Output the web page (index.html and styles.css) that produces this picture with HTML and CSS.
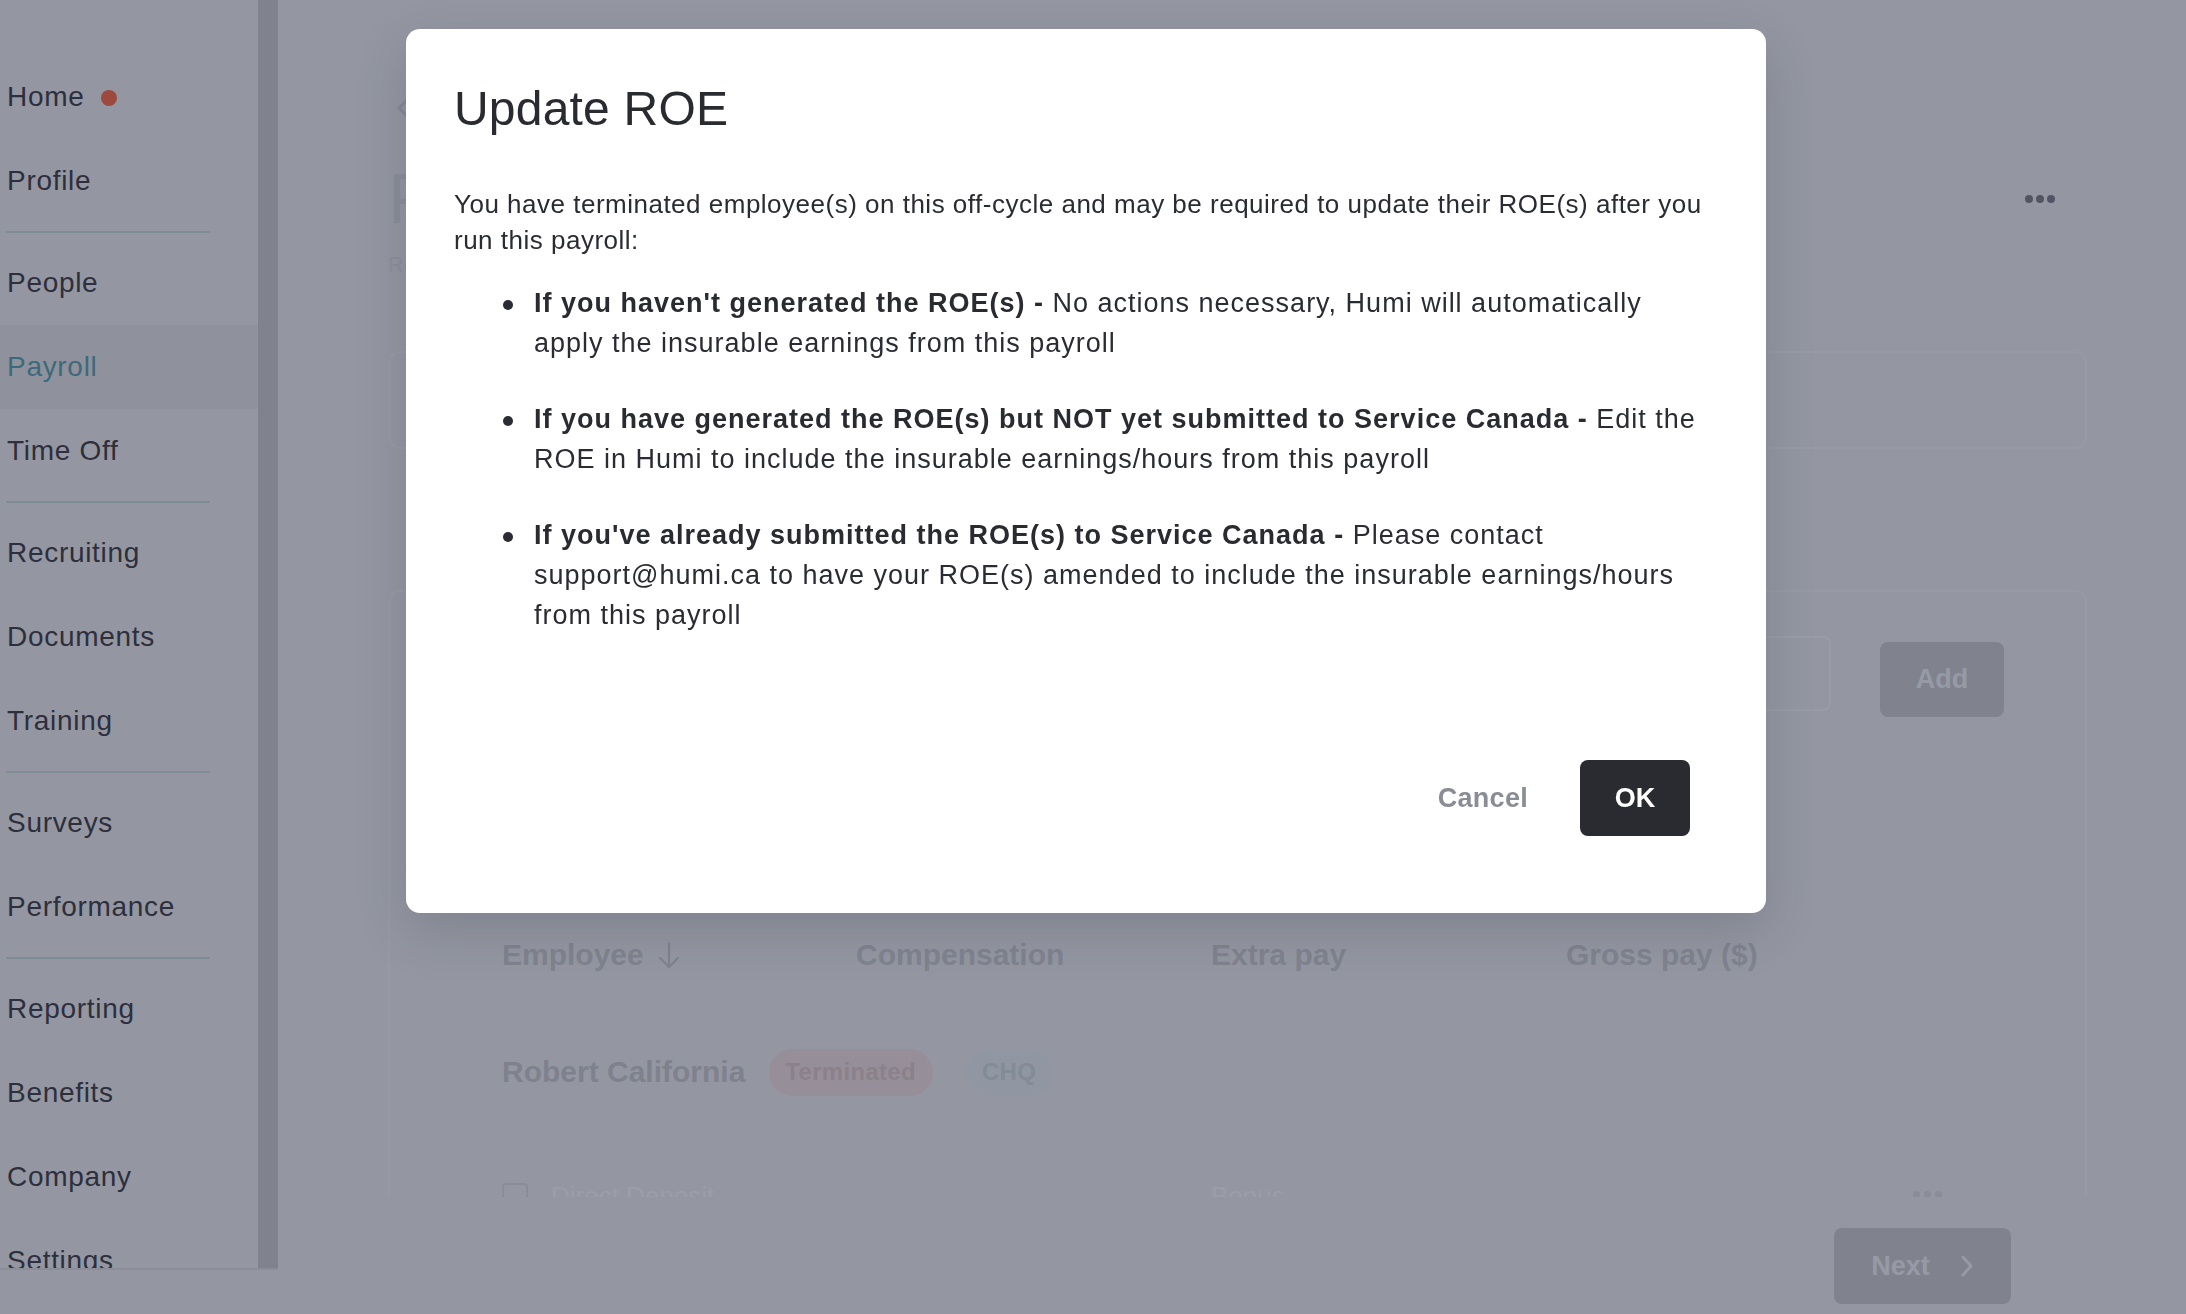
FILE: index.html
```html
<!DOCTYPE html>
<html lang="en">
<head>
<meta charset="utf-8">
<title>Update ROE</title>
<link rel="stylesheet" href="styles.css">
</head>
<body>
<div class="app">
  <aside class="side">
    <div class="side-scroll">
      <nav class="nav">
        <a class="nav-item">Home <span class="dot"></span></a>
        <a class="nav-item">Profile</a>
        <hr class="nav-sep">
        <a class="nav-item">People</a>
        <a class="nav-item active">Payroll</a>
        <a class="nav-item">Time Off</a>
        <hr class="nav-sep">
        <a class="nav-item">Recruiting</a>
        <a class="nav-item">Documents</a>
        <a class="nav-item">Training</a>
        <hr class="nav-sep">
        <a class="nav-item">Surveys</a>
        <a class="nav-item">Performance</a>
        <hr class="nav-sep">
        <a class="nav-item">Reporting</a>
        <a class="nav-item">Benefits</a>
        <a class="nav-item">Company</a>
        <a class="nav-item">Settings</a>
      </nav>
      <div class="scrollbar"></div>
    </div>
  </aside>

  <main class="main">
    <div class="back">
      <svg width="14" height="20" viewBox="0 0 14 20"><path d="M11 2 L3 10 L11 18" fill="none" stroke="#868995" stroke-width="3" stroke-linecap="round" stroke-linejoin="round"/></svg>
    </div>
    <div class="title-row">
      <h2 class="page-title">Payroll</h2>
      <div class="more"><i></i><i></i><i></i></div>
    </div>
    <div class="subtitle">Review off-cycle payroll</div>
    <section class="card card-top"></section>
    <section class="card card-main">
      <div class="form-row">
        <div class="input"></div>
        <div class="btn-add">Add</div>
      </div>
      <div class="thead">
        <div class="th">Employee
          <svg class="sort" width="22" height="30" viewBox="0 0 22 30"><path d="M11 3 V27 M2 18 L11 27 L20 18" fill="none" stroke="#80838f" stroke-width="2.2" stroke-linecap="round" stroke-linejoin="round"/></svg>
        </div>
        <div class="th">Compensation</div>
        <div class="th">Extra pay</div>
        <div class="th">Gross pay ($)</div>
      </div>
      <div class="emp-row">
        <span class="emp-name">Robert California</span>
        <span class="badge badge-term">Terminated</span>
        <span class="badge badge-chq">CHQ</span>
      </div>
      <div class="sub-row">
        <div class="sub-cell"><span class="check"></span>Direct Deposit</div>
        <div></div>
        <div class="sub-cell">Bonus</div>
        <div class="sub-cell dash">-</div>
        <div class="sub-cell mini-more"><i></i><i></i><i></i></div>
      </div>
    </section>
    <div class="footer-row">
      <div class="btn-next">Next
        <svg width="14" height="24" viewBox="0 0 14 24"><path d="M3 3 L11 12 L3 21" fill="none" stroke="#979aa5" stroke-width="3" stroke-linecap="round" stroke-linejoin="round"/></svg>
      </div>
    </div>
  </main>
</div>

<div class="modal" role="dialog">
  <h1 class="modal-title">Update ROE</h1>
  <p class="modal-text">You have terminated employee(s) on this off-cycle and may be required to update their ROE(s) after you run this payroll:</p>
  <ul class="modal-list">
    <li><div><b>If you haven't generated the ROE(s) -</b> No actions necessary, Humi will automatically apply the insurable earnings from this payroll</div></li>
    <li><div><b>If you have generated the ROE(s) but NOT yet submitted to Service Canada -</b> Edit the ROE in Humi to include the insurable earnings/hours from this payroll</div></li>
    <li><div><b>If you've already submitted the ROE(s) to Service Canada -</b> Please contact support@humi.ca to have your ROE(s) amended to include the insurable earnings/hours from this payroll</div></li>
  </ul>
  <div class="modal-footer">
    <span class="btn-cancel">Cancel</span>
    <span class="btn-ok">OK</span>
  </div>
</div>
</body>
</html>
```

FILE: styles.css
```css
* { box-sizing: border-box; }

html, body {
  margin: 0;
  width: 2186px;
  height: 1314px;
  overflow: hidden;
}

body {
  background: #9497a2;
  font-family: "Liberation Sans", Arial, sans-serif;
  color: #2d2f3c;
}

.app {
  display: flex;
  height: 1314px;
}

/* ---------- sidebar ---------- */
.side {
  width: 278px;
  flex: none;
}

.side-scroll {
  display: flex;
  height: 1270px;
  border-bottom: 2px solid #8b8e99;
  overflow: hidden;
}

.nav {
  width: 258px;
  padding-top: 55px;
  display: flex;
  flex-direction: column;
  flex: none;
}

.nav-item {
  display: flex;
  align-items: center;
  height: 84px;
  flex: none;
  padding-left: 7px;
  font-size: 28px;
  letter-spacing: 0.7px;
  color: #2d2f3c;
}

.nav-item.active {
  background: #8f929d;
  color: #3c6a7a;
}

.dot {
  width: 16px;
  height: 16px;
  border-radius: 50%;
  background: #9b4a3d;
  margin-left: 16px;
  margin-top: 2px;
}

.nav-sep {
  border: 0;
  height: 2px;
  width: 204px;
  margin: 8px 0 8px 6px;
  background: #7f8b97;
  flex: none;
}

.scrollbar {
  width: 20px;
  flex: none;
  background: #80828e;
}

/* ---------- main (behind overlay) ---------- */
.main {
  flex: 1;
  padding: 93px 99px 0 110px;
  display: flex;
  flex-direction: column;
}

.back {
  height: 30px;
  display: flex;
  align-items: center;
  padding-left: 8px;
}

.title-row {
  margin-top: 36px;
  height: 80px;
  display: flex;
  justify-content: space-between;
  align-items: center;
}

.page-title {
  margin: 0;
  font-size: 70px;
  line-height: 80px;
  font-weight: normal;
  color: #8b8e99;
}

.more {
  display: flex;
  gap: 3px;
  margin-right: 32px;
}

.more i {
  width: 8px;
  height: 8px;
  border-radius: 50%;
  background: #525463;
}

.subtitle {
  margin-top: 11px;
  font-size: 22px;
  line-height: 30px;
  color: #8c8f9a;
}

.card {
  border: 2px solid #979aa5;
  border-radius: 12px;
}

.card-top {
  margin-top: 71px;
  height: 98px;
}

.card-main {
  margin-top: 141px;
  height: 607px;
  overflow: hidden;
  padding: 44px 81px 0 112px;
  border-bottom: 0;
  border-radius: 12px 12px 0 0;
}

.form-row {
  display: flex;
  align-items: flex-start;
  gap: 49px;
}

.input {
  flex: 1;
  height: 75px;
  border: 2px solid #999ca7;
  border-radius: 8px;
}

.btn-add {
  margin-top: 6px;
  width: 124px;
  height: 75px;
  border-radius: 8px;
  background: #80838e;
  color: #979aa5;
  font-size: 27px;
  font-weight: bold;
  display: flex;
  align-items: center;
  justify-content: center;
}

.thead {
  margin-top: 208px;
  height: 60px;
  display: grid;
  grid-template-columns: 354px 355px 355px 1fr;
  align-items: center;
  font-size: 30px;
  font-weight: bold;
  color: #80838f;
}

.th {
  display: flex;
  align-items: center;
  gap: 14px;
}

.emp-row {
  margin-top: 57px;
  height: 60px;
  display: flex;
  align-items: center;
}

.emp-name {
  font-size: 30px;
  font-weight: bold;
  color: #7f828e;
}

.badge {
  height: 47px;
  border-radius: 24px;
  padding: 0 17px 0 16px;
  display: flex;
  align-items: center;
  font-size: 24px;
  font-weight: bold;
  letter-spacing: 0.3px;
}

.badge-term {
  margin-left: 24px;
  background: #968f99;
  color: #8b8189;
}

.badge-chq {
  margin-left: 33px;
  background: #9097a2;
  color: #838b97;
}

.sub-row {
  margin-top: 73px;
  height: 50px;
  display: grid;
  grid-template-columns: 354px 355px 355px 347px 1fr;
  align-items: start;
  font-size: 26px;
  color: #9b9ea9;
}

.sub-cell {
  display: flex;
  align-items: center;
  gap: 23px;
  padding-top: 6px;
}

.check {
  width: 26px;
  height: 26px;
  border: 2px solid #8a8d98;
  border-radius: 4px;
  margin-top: -2px;
}

.dash { padding-left: 9px; }

.mini-more {
  gap: 4px;
  padding-top: 16px;
  justify-content: flex-start;
}

.mini-more i {
  width: 7px;
  height: 7px;
  border-radius: 50%;
  background: #8a8d98;
}

.footer-row {
  margin-top: 31px;
  display: flex;
  justify-content: flex-end;
  padding-right: 76px;
}

.btn-next {
  width: 177px;
  height: 76px;
  border-radius: 8px;
  background: #80838e;
  color: #979aa5;
  font-size: 27px;
  font-weight: bold;
  display: flex;
  align-items: center;
  justify-content: center;
  gap: 30px;
}

/* ---------- modal ---------- */
.modal {
  position: fixed;
  top: 29px;
  left: 406px;
  width: 1360px;
  background: #ffffff;
  border-radius: 14px;
  padding: 52px 48px 77px 48px;
  box-shadow: 0 18px 50px rgba(40, 42, 58, 0.18);
  color: #2b2c33;
}

.modal-title {
  margin: 0;
  font-size: 48px;
  line-height: 56px;
  font-weight: normal;
  letter-spacing: 0.2px;
  color: #2a2b31;
}

.modal-text {
  margin: 49px 0 0;
  font-size: 26px;
  line-height: 36px;
  letter-spacing: 0.5px;
}

.modal-list {
  list-style: none;
  margin: 25px 0 0;
  padding: 0 4px 0 49px;
  font-size: 27px;
  line-height: 40px;
  letter-spacing: 1px;
}

.modal-list li {
  display: flex;
  gap: 21px;
}

.modal-list li + li {
  margin-top: 36px;
}

.modal-list li::before {
  content: "";
  flex: none;
  width: 10px;
  height: 10px;
  border-radius: 50%;
  background: #2b2c33;
  margin-top: 17px;
}

.modal-list b {
  font-weight: bold;
  color: #2a2b31;
}

.modal-footer {
  margin-top: 125px;
  display: flex;
  justify-content: flex-end;
  align-items: center;
  gap: 52px;
  padding-right: 28px;
}

.btn-cancel {
  font-size: 27px;
  font-weight: bold;
  letter-spacing: 0.3px;
  color: #8a8d95;
}

.btn-ok {
  width: 110px;
  height: 76px;
  border-radius: 8px;
  background: #2a2b30;
  color: #ffffff;
  font-size: 27px;
  font-weight: bold;
  display: flex;
  align-items: center;
  justify-content: center;
}
```
